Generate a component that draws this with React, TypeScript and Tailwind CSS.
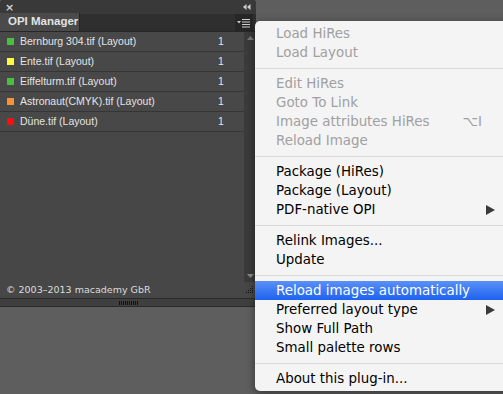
import React from 'react'

interface Row {
  name: string
  color: string
  count: number
}

const rows: Row[] = [
  { name: 'Bernburg 304.tif (Layout)', color: 'bg-[#45c13b]', count: 1 },
  { name: 'Ente.tif (Layout)', color: 'bg-[#fcfc3f]', count: 1 },
  { name: 'Eiffelturm.tif (Layout)', color: 'bg-[#45c13b]', count: 1 },
  { name: 'Astronaut(CMYK).tif (Layout)', color: 'bg-[#fa9234]', count: 1 },
  { name: 'Düne.tif (Layout)', color: 'bg-[#f60f0f]', count: 1 },
]

type MenuEntry =
  | { type: 'sep' }
  | { type: 'item'; label: string; disabled?: boolean; shortcut?: string; submenu?: boolean; active?: boolean }

const menu: MenuEntry[] = [
  { type: 'item', label: 'Load HiRes', disabled: true },
  { type: 'item', label: 'Load Layout', disabled: true },
  { type: 'sep' },
  { type: 'item', label: 'Edit HiRes', disabled: true },
  { type: 'item', label: 'Goto To Link', disabled: true },
  { type: 'item', label: 'Image attributes HiRes', disabled: true, shortcut: '⌥I' },
  { type: 'item', label: 'Reload Image', disabled: true },
  { type: 'sep' },
  { type: 'item', label: 'Package (HiRes)' },
  { type: 'item', label: 'Package (Layout)' },
  { type: 'item', label: 'PDF-native OPI', submenu: true },
  { type: 'sep' },
  { type: 'item', label: 'Relink Images...' },
  { type: 'item', label: 'Update' },
  { type: 'sep' },
  { type: 'item', label: 'Reload images automatically', active: true },
  { type: 'item', label: 'Preferred layout type', submenu: true },
  { type: 'item', label: 'Show Full Path' },
  { type: 'item', label: 'Small palette rows' },
  { type: 'sep' },
  { type: 'item', label: 'About this plug-in...' },
]

const PanelMenuIcon = () => (
  <svg width="14" height="10" viewBox="0 0 14 10">
    <path d="M0 3 L4 3 L2 5.5 Z" fill="#d0d0d0" />
    <rect x="5" y="1" width="8" height="1" fill="#d0d0d0" />
    <rect x="5" y="3.5" width="8" height="1" fill="#d0d0d0" />
    <rect x="5" y="6" width="8" height="1" fill="#d0d0d0" />
    <rect x="5" y="8.5" width="8" height="1" fill="#d0d0d0" />
  </svg>
)

const App: React.FC = () => {
  return (
    <div
      className="relative w-[503px] h-[394px] overflow-hidden bg-[#5e5e5e]"
      style={{ fontFamily: '"DejaVu Sans", "Liberation Sans", sans-serif' }}
    >
      {/* Palette */}
      <div className="w-[256px] h-[307px] flex flex-col bg-[#474747] border-b border-[#2a2a2a] rounded-t-[3px] overflow-hidden">
        {/* title bar */}
        <div className="h-[14px] bg-[#393939] flex items-center justify-between pl-[5px] pr-[5px]">
          <span className="text-[11px] leading-none text-[#cfcfcf] font-bold">×</span>
          <svg width="8" height="6" viewBox="0 0 8 6">
            <path d="M3.5 0 L3.5 6 L0 3 Z" fill="#cfcfcf" />
            <path d="M7.5 0 L7.5 6 L4 3 Z" fill="#cfcfcf" />
          </svg>
        </div>

        {/* tab row */}
        <div className="h-[18px] bg-[#2f2f2f] flex items-end justify-between border-b border-[#262626]">
          <div className="h-[18px] w-[80px] bg-[#4a4a4a] flex items-center pl-[8px] border-r border-[#262626]">
            <span className="text-[11.5px] font-bold text-[#e2e2e2] leading-none whitespace-nowrap font-['Liberation_Sans',sans-serif]">
              OPI Manager
            </span>
          </div>
          <div className="h-[17px] w-[18px] mr-[3px] bg-[#262626] flex items-center justify-center">
            <PanelMenuIcon />
          </div>
        </div>

        {/* list + scrollbar */}
        <div className="flex-1 flex min-h-0">
          <div className="flex-1 flex flex-col">
            {rows.map((row, i) => (
              <div
                key={i}
                className="h-[20px] flex items-center border-b border-[#353535] bg-[#484848]"
              >
                <div className={`w-[7px] h-[7px] ml-[7px] mr-[6px] ${row.color}`} />
                <span className="flex-1 text-[10.5px] text-[#e4e4e4] leading-none whitespace-nowrap font-['Liberation_Sans',sans-serif]">
                  {row.name}
                </span>
                <span className="w-[26px] text-[10.5px] text-[#e4e4e4] leading-none font-['Liberation_Sans',sans-serif]">
                  {row.count}
                </span>
              </div>
            ))}
          </div>
          <div className="w-[12px] bg-[#3b3b3b] flex flex-col items-center justify-between py-[4px]">
            <svg width="7" height="4" viewBox="0 0 7 4">
              <path d="M3.5 0 L7 4 L0 4 Z" fill="#7a7a7a" />
            </svg>
            <svg width="7" height="4" viewBox="0 0 7 4">
              <path d="M0 0 L7 0 L3.5 4 Z" fill="#8a8a8a" />
            </svg>
          </div>
        </div>

        {/* footer */}
        <div className="h-[16px] flex items-center justify-between pl-[6px] pr-[2px]">
          <span className="text-[9.5px] text-[#dcdcdc] leading-none whitespace-nowrap">© 2003–2013 macademy GbR</span>
          <svg width="8" height="8" viewBox="0 0 8 8">
            {[
              [7, 1], [5, 3], [7, 3], [3, 5], [5, 5], [7, 5], [1, 7], [3, 7], [5, 7], [7, 7],
            ].map(([x, y], i) => (
              <rect key={i} x={x - 1} y={y - 1} width="1" height="1" fill="#151515" />
            ))}
          </svg>
        </div>

        {/* bottom strip */}
        <div className="h-[8px] bg-[#3f3f3f] border-t border-[#2a2a2a] flex items-center justify-center">
          <div className="flex gap-[1px]">
            {Array.from({ length: 10 }).map((_, i) => (
              <div key={i} className="w-[1px] h-[4px] bg-[#111]" />
            ))}
          </div>
        </div>
      </div>

      {/* Flyout menu */}
      <div className="absolute left-[255px] top-[21px] w-[260px] bg-[#f4f4f4] rounded-l-[5px] py-[3px] shadow-[0_2px_8px_rgba(0,0,0,0.45)]">
        {menu.map((entry, i) =>
          entry.type === 'sep' ? (
            <div key={i} className="h-[12px] flex items-center">
              <div className="w-full h-[1px] bg-[#dadada]" />
            </div>
          ) : (
            <div
              key={i}
              className={`h-[19px] flex items-center pl-[21px] pr-[14px] text-[13.4px] leading-none whitespace-nowrap ${
                entry.active
                  ? 'bg-[linear-gradient(#5a90f7,#1e62f0)] text-white'
                  : entry.disabled
                    ? 'text-[#a0a0a0]'
                    : 'text-black'
              }`}
            >
              <span className="flex-1">{entry.label}</span>
              {entry.shortcut && <span className="mr-[19px]">{entry.shortcut}</span>}
              {entry.submenu && (
                <svg width="9" height="10" viewBox="0 0 9 10" className="mr-[6px]">
                  <path d="M0 0 L9 5 L0 10 Z" fill="#3a3a3a" />
                </svg>
              )}
            </div>
          )
        )}
      </div>
    </div>
  )
}

export default App
